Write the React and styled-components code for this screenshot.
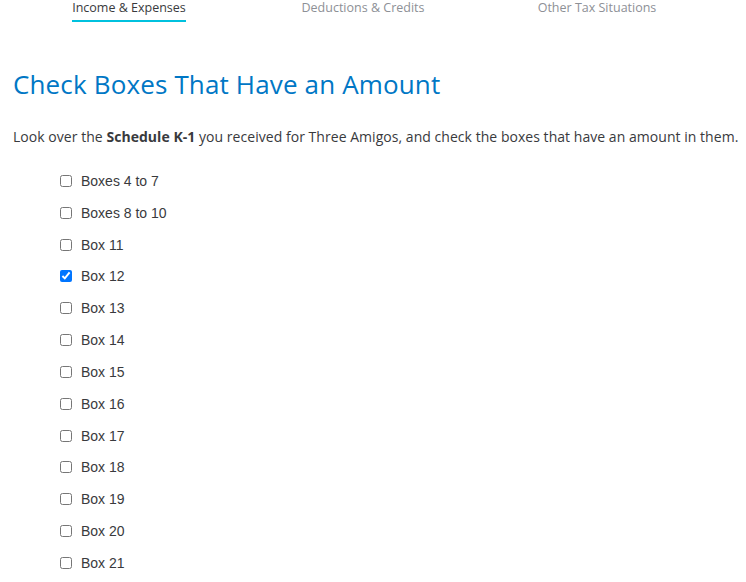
import React, { useState } from 'react';
import styled, { createGlobalStyle } from 'styled-components';

const GlobalStyle = createGlobalStyle`
  html, body {
    margin: 0;
    padding: 0;
    background: #ffffff;
    overflow: hidden;
  }
`;

const Page = styled.div`
  width: 746px;
  height: 582px;
  padding: 0 0 0 13px;
  box-sizing: border-box;
  font-family: 'Open Sans', 'Liberation Sans', sans-serif;
  color: #393a3d;
`;

const Tabs = styled.nav`
  display: grid;
  grid-template-columns: repeat(3, 234px);
  margin-left: -1px;
  height: 22px;
`;

const Tab = styled.div`
  justify-self: center;
  height: 22px;
  box-sizing: border-box;
  font-size: 12.5px;
  line-height: 16px;
  color: ${p => (p.$active ? '#393a3d' : '#8d9096')};
  border-bottom: 2px solid ${p => (p.$active ? '#00c1de' : 'transparent')};
  white-space: nowrap;
`;

const Title = styled.h1`
  margin: 46px 0 0;
  font-size: 26px;
  font-weight: 400;
  line-height: 32px;
  color: #0077c5;
  letter-spacing: 0.15px;
`;

const Intro = styled.p`
  margin: 27px 0 0;
  font-size: 14px;
  line-height: 20px;
  white-space: nowrap;
  letter-spacing: 0.04px;

  strong {
    font-weight: 700;
  }
`;

const BoxList = styled.ul`
  list-style: none;
  margin: 24px 0 0;
  padding: 0 0 0 44px;
  display: flex;
  flex-direction: column;
  gap: 11.83px;
`;

const Row = styled.li`
  display: flex;
  align-items: center;
  height: 20px;
`;

const Check = styled.input.attrs({ type: 'checkbox' })`
  width: 12px;
  height: 12px;
  margin: 0 9px 0 3px;
`;

const Label = styled.label`
  font-family: 'Liberation Sans', Arial, sans-serif;
  font-size: 14px;
  color: #393a3d;
`;

const boxes = [
  'Boxes 4 to 7',
  'Boxes 8 to 10',
  'Box 11',
  'Box 12',
  'Box 13',
  'Box 14',
  'Box 15',
  'Box 16',
  'Box 17',
  'Box 18',
  'Box 19',
  'Box 20',
  'Box 21',
];

export default function App() {
  const [checked, setChecked] = useState({ 'Box 12': true });

  return (
    <Page>
      <GlobalStyle />
      <Tabs>
        <Tab $active>Income &amp; Expenses</Tab>
        <Tab>Deductions &amp; Credits</Tab>
        <Tab>Other Tax Situations</Tab>
      </Tabs>
      <Title>Check Boxes That Have an Amount</Title>
      <Intro>
        Look over the <strong>Schedule K-1</strong> you received for Three Amigos, and check the boxes that have an amount in them.
      </Intro>
      <BoxList>
        {boxes.map((b, i) => (
          <Row key={b}>
            <Check
              id={`box-${i}`}
              checked={!!checked[b]}
              onChange={e => setChecked({ ...checked, [b]: e.target.checked })}
            />
            <Label htmlFor={`box-${i}`}>{b}</Label>
          </Row>
        ))}
      </BoxList>
    </Page>
  );
}
